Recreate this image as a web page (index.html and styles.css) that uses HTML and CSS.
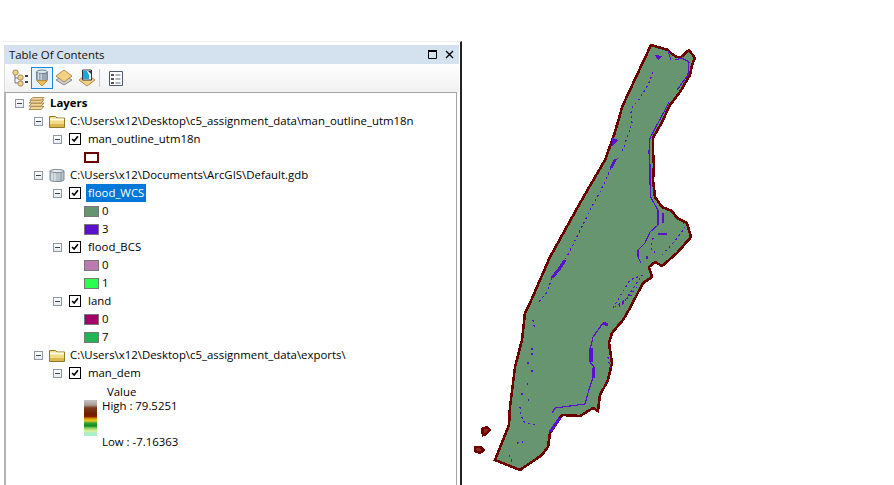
FILE: index.html
```html
<!DOCTYPE html>
<html lang="en">
<head>
<meta charset="utf-8">
<title>Table Of Contents</title>
<link rel="stylesheet" href="styles.css">
</head>
<body>
<svg class="defs" width="0" height="0" aria-hidden="true">
  <symbol id="check" viewBox="0 0 12 12"><path d="M2.5 6 L5 8.5 L9.5 2.8" fill="none" stroke="#000" stroke-width="2"/></symbol>
  <symbol id="folder" viewBox="0 0 16 13">
    <path d="M.5 12.500V1.500h6l1.500 1.500h7.500v9.500z" fill="#f2dc86" stroke="#8f7a2c"/>
    <path d="M1 3.500h14v2H1z" fill="#fffbe0"/>
    <path d="M1 9h14v3H1z" fill="#dcb94e"/>
  </symbol>
</svg>
<div class="app">
  <section class="toc">
    <header class="titlebar">
      <span class="title">Table Of Contents</span>
      <span class="win-btns">
        <svg class="win-icon" viewBox="0 0 9 9"><path d="M.5 1.500h8v7h-8z" fill="none" stroke="#000"/><path d="M0 1h9" stroke="#000" stroke-width="2"/></svg>
        <svg class="win-icon" viewBox="0 0 9 9"><path d="M1 1l7 7M8 1L1 8" stroke="#000" stroke-width="1.400"/></svg>
      </span>
    </header>
    <div class="toolbar">
      <span class="tool"><svg viewBox="0 0 18 18"><g fill="#f3d08a" stroke="#a98b55"><rect x="1" y="1" width="5" height="5" rx="2"/><rect x="6" y="6" width="5" height="5" rx="2"/><rect x="6" y="12" width="5" height="5" rx="2"/></g><path d="M3 6v3h3M3 9v5h3" fill="none" stroke="#777"/><path d="M13 6h3v2h-3zM13 12h3v2h-3z" fill="#345"/></svg></span>
      <span class="tool selected"><svg viewBox="0 0 18 20"><path d="M3 3v9c0 2 12 2 12 0V3z" fill="#9aa7b5" stroke="#66717d"/><ellipse cx="9" cy="3" rx="6" ry="2" fill="#dfe6ee" stroke="#66717d"/><path d="M5 3.800v8M8 5v8" stroke="#e4ebf2"/><path d="M3 13h12l-6 6z" fill="#f0bd55" stroke="#b98a35"/></svg></span>
      <span class="tool wide-after"><svg viewBox="0 0 18 18"><path d="M9 6l8 5-8 5-8-5z" fill="#d0d0d0" stroke="#888"/><path d="M9 1l8 6-8 6-8-6z" fill="#f5cf82" stroke="#ad8c4e"/></svg></span>
      <span class="tool before-sep"><svg viewBox="0 0 18 18"><path d="M9 5l8 6-8 6-8-6z" fill="#f5cf82" stroke="#ad8c4e"/><path d="M4.500 1h9v10h-9z" fill="#fff" stroke="#334"/><path d="M5 2h4l2 4v4H5z" fill="#1aa7d8"/><path d="M10 2h3v3z" fill="#334"/></svg></span>
      <span class="tool-sep"></span>
      <span class="tool list"><svg viewBox="0 0 14 15"><path d="M.5.500h13v14H.5z" fill="#fff" stroke="#4a5a70"/><path d="M2 3h3v2H2zM2 7h3v2H2zM2 11h3v2H2z" fill="#555"/><path d="M6.500 4h5M6.500 8h5M6.500 12h5" stroke="#5a6a85"/></svg></span>
    </div>
    <div class="tree">
      <div class="row l0"><i class="exp"></i><svg class="layers-icon" viewBox="0 0 18 14"><g fill="#f2d49a" stroke="#a2854c"><path d="M4 10h13l-3 3.500H1z"/><path d="M4 6.500h13l-3 3.500H1z"/><path d="M4 3h13l-3 3.500H1z"/><path d="M5 .5h12l-3 3H2z"/></g></svg><span class="strong">Layers</span></div>
      <div class="row l1"><i class="exp"></i><svg class="ws-icon"><use href="#folder"/></svg><span>C:\Users\x12\Desktop\c5_assignment_data\man_outline_utm18n</span></div>
      <div class="row l2"><i class="exp"></i><b class="cb"><svg><use href="#check"/></svg></b><span class="name">man_outline_utm18n</span></div>
      <div class="row sym"><i class="sw outline"></i></div>
      <div class="row l1"><i class="exp"></i><svg class="ws-icon" viewBox="0 0 16 13"><path d="M1 2v9c0 2 14 2 14 0V2z" fill="#b9c3cc" stroke="#7c8791"/><ellipse cx="8" cy="2" rx="7" ry="1.600" fill="#e6ebf0" stroke="#7c8791"/><path d="M3 3.500v8M6 4v8" stroke="#eef2f5"/><path d="M12 4v7.500" stroke="#8a949e"/></svg><span>C:\Users\x12\Documents\ArcGIS\Default.gdb</span></div>
      <div class="row l2"><i class="exp"></i><b class="cb"><svg><use href="#check"/></svg></b><span class="name active">flood_WCS</span></div>
      <div class="row sym"><i class="sw c-green"></i><span>0</span></div>
      <div class="row sym"><i class="sw c-violet"></i><span>3</span></div>
      <div class="row l2"><i class="exp"></i><b class="cb"><svg><use href="#check"/></svg></b><span class="name">flood_BCS</span></div>
      <div class="row sym"><i class="sw c-pink"></i><span>0</span></div>
      <div class="row sym"><i class="sw c-lime"></i><span>1</span></div>
      <div class="row l2"><i class="exp"></i><b class="cb"><svg><use href="#check"/></svg></b><span class="name">land</span></div>
      <div class="row sym"><i class="sw c-magenta"></i><span>0</span></div>
      <div class="row sym"><i class="sw c-emerald"></i><span>7</span></div>
      <div class="row l1"><i class="exp"></i><svg class="ws-icon"><use href="#folder"/></svg><span>C:\Users\x12\Desktop\c5_assignment_data\exports\</span></div>
      <div class="row l2"><i class="exp"></i><b class="cb"><svg><use href="#check"/></svg></b><span class="name">man_dem</span></div>
      <div class="row value"><span>Value</span></div>
      <div class="legend">
        <i class="ramp"></i>
        <div class="ramp-labels"><span>High : 79.5251</span><span>Low : -7.16363</span></div>
      </div>
    </div>
  </section>
  <svg class="map" viewBox="462 0 432 485" shape-rendering="crispEdges">
    <path class="land" d="M651 45L668 50L672 54L677 57L681 57L689 50L695 58L692 65L690 75L680 92L670 105L662 122L653 138L653 152L654 165L653 180L655 197L662 207L672 211L677 218L687 223L691 237L677 253L662 266L655 262L649 267L652 277L643 283L630 308L623 320L612 333L609 343L612 363L608 380L600 395L598 411L593 408L580 416L562 415L550 433L548 447L542 455L520 470L495 460L509 425L510 407L515 367L522 340L525 313L530 303L550 257L580 203L605 160L614 135L620 115L622 107Z"/>
    <g class="water">
      <path d="M668 51L671 60M675 60L682 58L689 62L688 75L677 90M669 102L664 112L658 123L650 138L649 152L650 165L650 183L651 198L658 210L658 225L650 232L645 243L638 250L638 257L641 263"/>
      <path d="M663 213V223M658 234H667M603 323L593 337L590 350V362L594 367L593 377L588 393L585 404L555 408L552 413"/>
      <path class="thick" d="M615 160L611 168M565 260L560 268L552 278M590 350V362M593 368V378M560 418L550 432M603 323L608 325"/>
      <path class="dash" d="M653 72L648 85L640 98L632 108L631 112L632 123L628 135L622 152M611 168L600 192L590 210L572 247L565 260M552 278L547 292L538 303M653 238L651 248L655 253M662 255L673 243L685 228L683 223M643 275L630 280L613 308M640 278L622 305M637 287L618 308M632 295L615 307M533 320L535 330M532 348V355M527 363H532M532 370V372M528 383L526 386M522 393V397M528 400H529M520 407L521 416L525 423L537 425M517 443L523 442M509 455L512 462M608 357L610 368M603 388L608 382"/>
      <path class="blob" d="M655 55L662 56L658 60ZM612 138L618 140L612 147ZM613 160L618 158L613 164ZM646 256h2v3h-2ZM589 348h4v14h-4Z"/>
    </g>
    <g class="islands">
      <path d="M482 429L487 427L490 430L486 434L483 435Z"/>
      <path d="M475 447L480 447L484 450L480 453L475 451Z"/>
    </g>
  </svg>
</div>
</body>
</html>
```
FILE: styles.css
```css
* { box-sizing: border-box; }
html, body { margin: 0; height: 100%; background: #fff; overflow: hidden; }
body { font: 11.4px/18px "Open Sans", "Noto Sans", sans-serif; color: #000; }
.defs { position: absolute; }
.app { display: flex; height: 485px; padding-top: 41px; }

.toc {
  flex: 0 0 462px;
  display: flex;
  flex-direction: column;
  padding: 3px 1px 0 0;
  border-top: 1px solid #eee;
  border-right: 2px solid #222;
  border-left: 4px solid #fff;
}
.titlebar {
  flex: 0 0 19px;
  display: flex;
  align-items: center;
  justify-content: space-between;
  padding: 0 5px 0 4px;
  background: #d4e1ee;
  border-left: 1px solid #dcdcdc;
}
.title { color: #111; }
.win-btns { display: flex; gap: 8px; }
.win-icon { width: 9px; height: 9px; display: block; }

.toolbar {
  flex: 0 0 28px;
  display: flex;
  align-items: center;
  padding-left: 7px;
  background: linear-gradient(#fff, #f1f1f1);
  border-left: 1px solid #dcdcdc;
}
.tool { display: flex; align-items: center; justify-content: center; width: 18px; height: 18px; margin-right: 1px; }
.tool svg { width: 18px; height: 18px; display: block; }
.tool.selected { width: 22px; height: 22px; margin-right: 2px; background: #e5f1fb; border: 1px solid #1c86d8; }
.tool.selected svg { width: 16px; height: 18px; }
.tool.wide-after { margin-right: 5px; }
.tool.before-sep { margin-right: 3px; }
.tool-sep { width: 1px; height: 18px; background: #c8c8c8; margin-right: 7px; }
.tool.list svg { width: 14px; height: 15px; }

.tree {
  flex: 1;
  margin-right: 2px;
  padding: 1px 0 0;
  background: #fff;
  border: 1px solid #a4a4a4;
  border-left: 2px solid #b4b4b4;
  border-bottom: 0;
  min-height: 0;
}
.row { display: flex; align-items: center; height: 18px; white-space: nowrap; }
.l0 { padding-left: 9px; }
.l1 { padding-left: 28px; }
.l2 { padding-left: 47px; }
.sym { padding-left: 78px; }
.exp {
  position: relative;
  flex: none;
  width: 9px;
  height: 9px;
  border: 1px solid #8e99a6;
  background: linear-gradient(#fff, #e8ebee);
}
.exp::before { content: ""; position: absolute; left: 1px; right: 1px; top: 3px; height: 1px; background: #3a4450; }
.layers-icon { flex: none; width: 17px; height: 13px; margin: 0 5px 0 4px; }
.ws-icon { flex: none; width: 16px; height: 13px; margin: 0 5px 0 6px; }
.strong { font-weight: 700; }
.cb { flex: none; width: 12px; height: 12px; margin-left: 7px; border: 1px solid #000; background: #fff; }
.cb svg { display: block; width: 10px; height: 10px; }
.name { margin-left: 5px; padding: 0 2px; height: 18px; }
.name.active { background: #0078d7; color: #fff; }
.sw { flex: none; width: 15px; height: 11px; margin-right: 3px; border: 1px solid #777; }
.outline { background: #fff; border: 2px solid #6e0000; }
.c-green { background: #659470; }
.c-violet { background: #5a10cc; }
.c-pink { background: #bd79b1; }
.c-lime { background: #2bff4e; }
.c-magenta { background: #a5006a; }
.c-emerald { background: #1fb455; }
.value { height: 17px; padding: 1px 0 0 101px; line-height: 15px; }
.legend { display: flex; padding-left: 78px; }
.ramp {
  flex: none;
  width: 13px;
  height: 36px;
  margin-top: 1px;
  background: linear-gradient(#c4c4c4 0, #a89e94 14%, #7a3a1c 22%, #6e1c00 40%, #8a1e00 46%, #d8a000 52%, #e8c82a 58%, #39a030 64%, #0c8a28 72%, #8fcc60 78%, #e0f0a0 86%, #a8f0c8 92%, #a8f0c8 100%);
}
.ramp-labels { display: flex; flex-direction: column; margin-left: 5px; gap: 22px; line-height: 14px; }

.map { flex: 1; margin-top: -41px; height: 485px; display: block; }
.land { fill: #67956f; stroke: #6e0000; stroke-width: 2.6; }
.water path { fill: none; stroke: #5a10cc; stroke-width: 1.2; }
.water .thick { stroke-width: 3; }
.water .dash { stroke-dasharray: 2 3; }
.water .blob { fill: #5a10cc; stroke: none; }
.islands path { fill: #8a2a22; stroke: #6e0000; stroke-width: 2.6; }
```
